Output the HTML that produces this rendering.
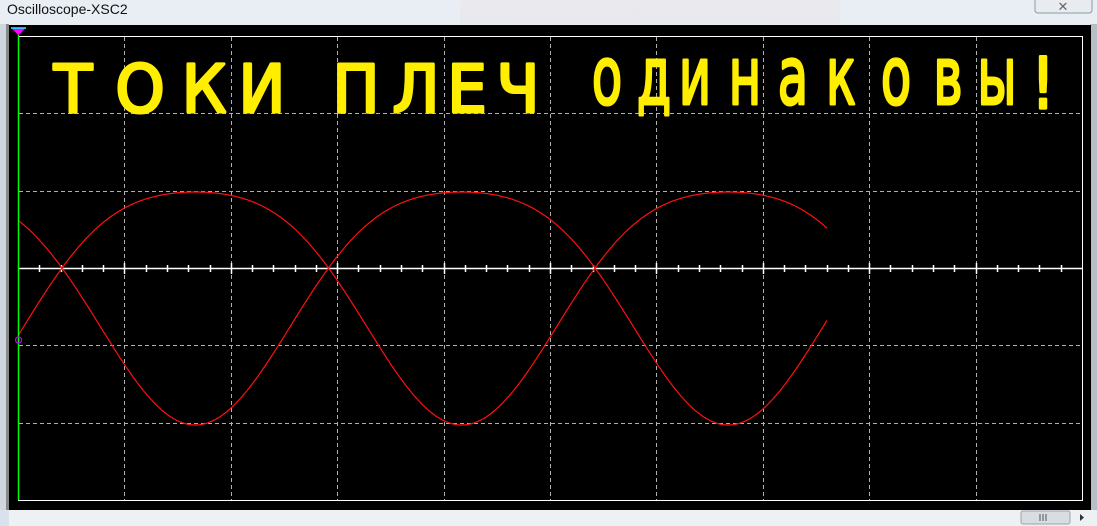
<!DOCTYPE html>
<html><head><meta charset="utf-8"><style>
html,body{margin:0;padding:0;width:1097px;height:526px;overflow:hidden;background:#dfe6ee;}
svg{display:block}
</style></head><body>
<svg id="s" width="1097" height="526" viewBox="0 0 1097 526" xmlns="http://www.w3.org/2000/svg">
<defs><linearGradient id="tb" x1="0" y1="0" x2="0" y2="1"><stop offset="0" stop-color="#e9eef4"/><stop offset="1" stop-color="#d9e2ec"/></linearGradient></defs>
<rect x="0" y="0" width="1097" height="526" fill="url(#tb)"/>
<rect x="460" y="0" width="380" height="24" fill="#e8e2e6" opacity="0.4"/>
<text x="7" y="14" font-family="Liberation Sans, sans-serif" font-size="14" fill="#111">Oscilloscope-XSC2</text>
<rect x="1035" y="-4" width="57" height="17" rx="3" fill="#e8ecf0" stroke="#8d98a4"/>
<text x="1063" y="11" font-family="Liberation Sans, sans-serif" font-size="13" fill="#666" text-anchor="middle">✕</text>
<rect x="0" y="24" width="9" height="486" fill="#cfd6de"/>
<rect x="6" y="24" width="3" height="486" fill="#888"/>
<rect x="1090" y="24" width="7" height="486" fill="#b8bec6"/>
<rect x="9" y="25" width="1082" height="485" fill="#000"/>
<rect x="9" y="510" width="1088" height="16" fill="#eef1f4"/>
<rect x="1021" y="511" width="49" height="13" rx="2" fill="#d8dde2" stroke="#9aa2aa"/>
<path d="M1040 514v7M1043 514v7M1046 514v7" stroke="#555"/>
<path d="M1080 514l4 3.5-4 3.5z" fill="#333"/>
<g id="grid" stroke="#b0b0b0" stroke-width="1" stroke-dasharray="4,3"></g>
<rect x="18.5" y="36.5" width="1064" height="464" fill="none" stroke="#fff" stroke-width="1"/>
<g id="ax" stroke="#fff" stroke-width="1.5"></g>
<path id="c1" fill="none" stroke="#ff1010" stroke-width="1.2"/>
<path id="c2" fill="none" stroke="#ff1010" stroke-width="1.2"/>
<line x1="18.5" y1="30" x2="18.5" y2="500" stroke="#00ff00" stroke-width="1.5"/>
<path d="M11 28h15l-7.5 7z" fill="#ff00ff"/>
<path d="M11 28h15" stroke="#00ffff" stroke-width="1.5"/>
<circle cx="18.5" cy="340" r="3" fill="none" stroke="#c000ff" stroke-width="1.2"/>
<g id="txt" fill="#ffee00" stroke="#ffee00" stroke-width="3" stroke-linejoin="round" font-family="DejaVu Sans, sans-serif"></g>
</svg>
<script>
var ns="http://www.w3.org/2000/svg";
function el(p,t,a,txt){var e=document.createElementNS(ns,t);for(var k in a)e.setAttribute(k,a[k]);if(txt)e.textContent=txt;p.appendChild(e);return e;}
var g=document.getElementById('grid');
for(var i=1;i<10;i++){var x=Math.round(18+106.4*i)+0.5;el(g,'line',{x1:x,y1:37,x2:x,y2:500});}
for(var j=1;j<6;j++){if(j==3)continue;var y=Math.round(36+77.33*j)+0.5;el(g,'line',{x1:19,y1:y,x2:1082,y2:y});}
var ax=document.getElementById('ax');
el(ax,'line',{x1:19,y1:268.5,x2:1082,y2:268.5});
for(var k=1;k<50;k++){var x=Math.round(18+21.28*k)+0.5;var big=k%5==0;el(ax,'line',{x1:x,y1:big?263:265,x2:x,y2:big?274:272});}
function yv(s){return 268-116.5*s+40.5*s*s;}
var d1="",d2="";
for(var x=18;x<=827;x+=1){var s=Math.sin(2*Math.PI*(x-62)/533);
d1+=(x==18?"M":"L")+x+" "+yv(s).toFixed(1);d2+=(x==18?"M":"L")+x+" "+yv(-s).toFixed(1);}
document.getElementById('c1').setAttribute('d',d1);document.getElementById('c2').setAttribute('d',d2);
var T=document.getElementById('txt');
var caps=[["Т",73],["О",140],["К",204],["И",262],["П",356],["Л",416],["Е",467],["Ч",518]];
caps.forEach(function(c){el(T,'text',{transform:"translate("+c[1]+",112) scale(0.95,1)","font-size":66,"text-anchor":"middle"},c[0]);});
var low=[["о",607],["д",654],["и",695],["н",745],["а",793],["к",841],["о",896],["в",948],["ы",997]];
low.forEach(function(c){el(T,'text',{transform:"translate("+c[1]+",104) scale(0.62,1)","font-size":80,"text-anchor":"middle"},c[0]);});
el(T,'text',{transform:"translate(1043,108) scale(0.9,1.1)","font-size":64,"text-anchor":"middle"},"!");
</script>
</body></html>
